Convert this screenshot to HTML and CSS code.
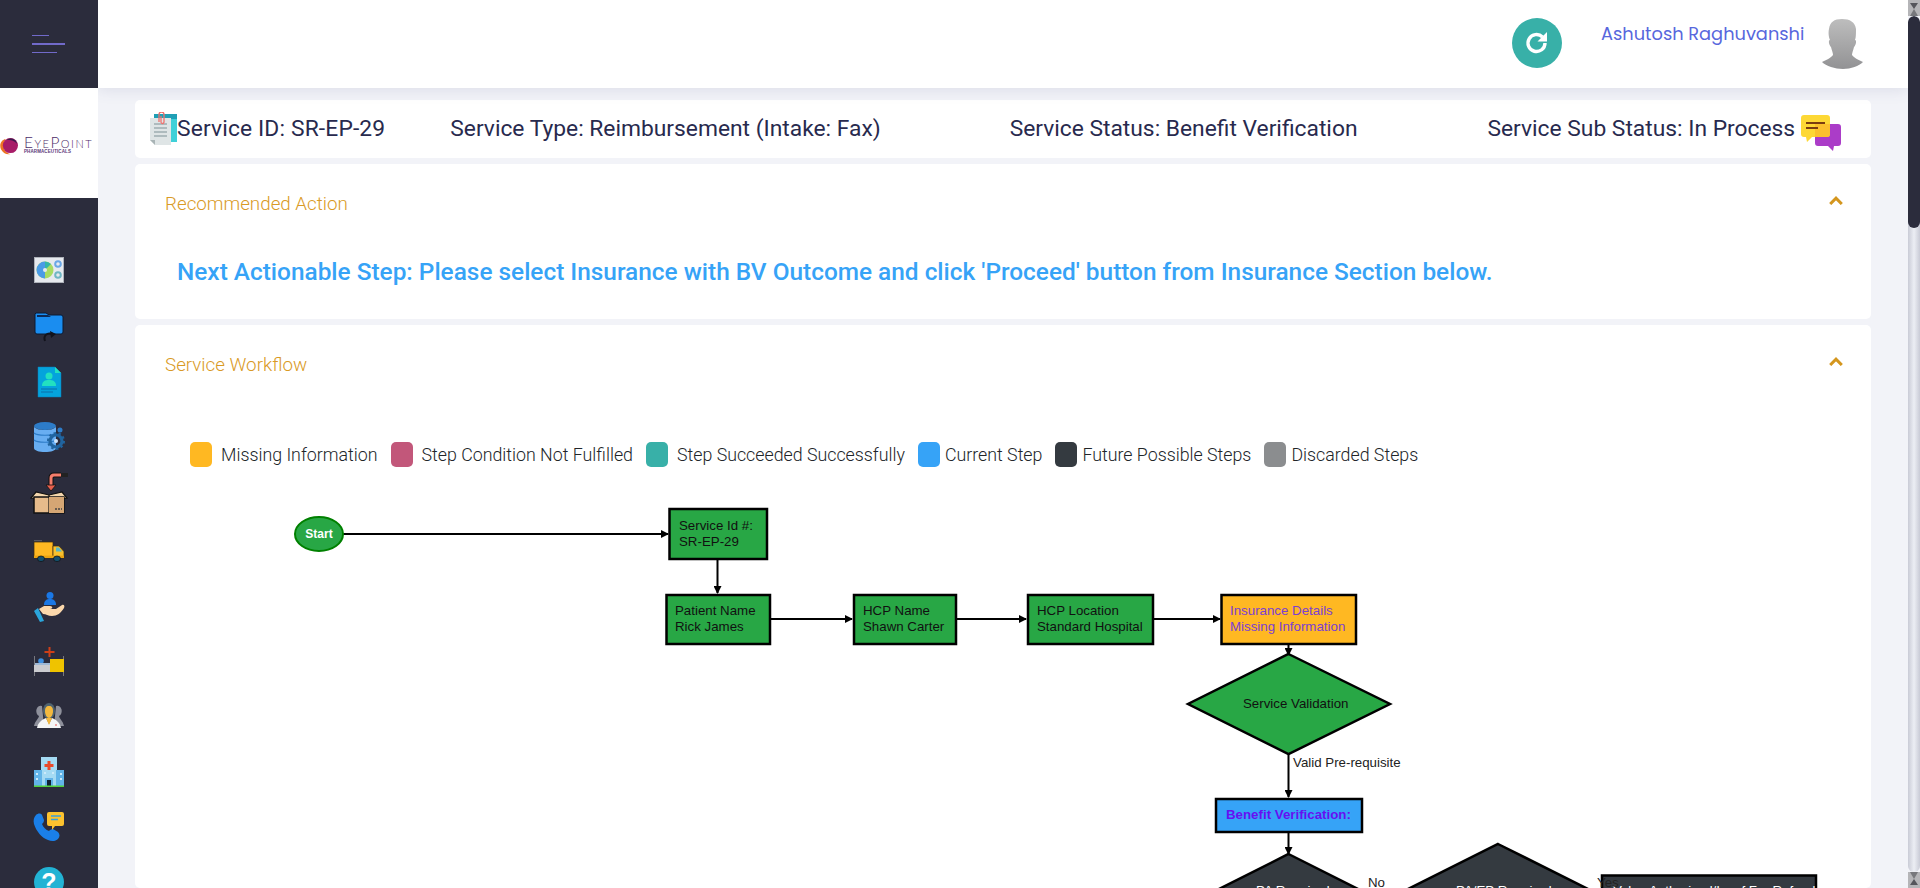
FILE: index.html
```html
<!DOCTYPE html>
<html lang="en">
<head>
<meta charset="utf-8">
<title>Service Workflow</title>
<link rel="stylesheet" href="styles.css">
</head>
<body>
<div class="app">
  <aside class="sidebar">
    <div class="burger-box">
      <span class="burger b1"></span><span class="burger b2"></span><span class="burger b3"></span>
    </div>
    <div class="logo">
      <svg class="logo-mark" viewBox="0 0 19 19"><path d="M6 2C1 3-1 8 1 13c2 4 6 6 10 5-4-1-7-4-7-8 0-3 1-6 2-8z" fill="#ee7423"/><circle cx="11" cy="9" r="8" fill="#a81c68"/><path d="M7 3c4-3 10-1 11 4-3-3-7-4-11-4z" fill="#3d1a4e"/></svg>
      <div class="logo-text">
        <div class="logo-name">EyePoint</div>
        <div class="logo-sub">PHARMACEUTICALS</div>
      </div>
    </div>
    <nav class="nav">
      <svg class="nav-icon" viewBox="0 0 30 30"><rect x="0.5" y="0.5" width="29" height="25" fill="#e6e9ee" stroke="#aeb2ba"/><circle cx="11" cy="13" r="8.5" fill="#a8dc62"/><path d="M11 13V4.500a8.500 8.500 0 0 0 0 17z" fill="#4a9be6"/><path d="M11 13V4.500a8.500 8.500 0 0 1 6 2.500z" fill="#35b6a6"/><circle cx="11" cy="13" r="2" fill="#e6e9ee"/><circle cx="24" cy="7" r="2.800" fill="none" stroke="#6aa7e6" stroke-width="2"/><circle cx="24" cy="18" r="2.800" fill="none" stroke="#6fb6c4" stroke-width="2"/></svg>
      <svg class="nav-icon" viewBox="0 0 30 30"><path d="M2 1h10l3 2h12a2 2 0 0 1 2 2v15a2 2 0 0 1-2 2H3a2 2 0 0 1-2-2V2z" fill="#1a8df0" stroke="#0d1a33" stroke-width="1"/><path d="M3 3h11l3 2H3z" fill="#0d2a55"/><path d="M11 29c-2-5 2-9 7-7" fill="none" stroke="#12131c" stroke-width="2"/><path d="M16 19l6 3-5 4z" fill="#12131c"/></svg>
      <svg class="nav-icon" viewBox="0 0 30 30"><path d="M4 0h17l6 6v24H4z" fill="#04a3dc" stroke="#0a7fb8" stroke-width=".5"/><path d="M21 0l6 6h-6z" fill="#22e0c0"/><circle cx="15" cy="9" r="3.500" fill="#22e0c0"/><path d="M8 19c0-5 3-6 7-6s7 1 7 6z" fill="#22e0c0"/><path d="M7 22h16M7 25h12" stroke="#0a6fa8" stroke-width="1"/></svg>
      <svg class="nav-icon" viewBox="0 0 30 30"><ellipse cx="11" cy="4" rx="11" ry="4" fill="#2d7cc8"/><path d="M0 4v22c0 2.500 5 4 11 4s11-1.500 11-4V4c0 2.500-5 4-11 4S0 6.500 0 4z" fill="#68aef2"/><path d="M0 11c3 3 19 3 22 0M0 18c3 3 19 3 22 0" fill="none" stroke="#2d7cc8" stroke-width="1.200"/><circle cx="26" cy="8" r="2.500" fill="#2d7cc8"/><circle cx="22" cy="19" r="6" fill="none" stroke="#20649f" stroke-width="3.200"/><circle cx="22" cy="19" r="8" fill="none" stroke="#20649f" stroke-width="2" stroke-dasharray="2.500 2.500"/><circle cx="22" cy="19" r="2" fill="#cfe6fb"/></svg>
      <svg class="nav-icon tall" viewBox="0 0 38 41"><path d="M21 13V5q0-3 3-3h7" fill="none" stroke="#111" stroke-width="5"/><path d="M21 13V5q0-3 3-3h7" fill="none" stroke="#f57d6c" stroke-width="3"/><path d="M31 0h7v4h-7z" fill="#222"/><path d="M16 12h10l-5 6z" fill="#e8604c" stroke="#111" stroke-width=".8"/><path d="M1 25l5-6 13 3 13-3 5 6-14 2z" fill="#f3d6ac" stroke="#111" stroke-width="1.200"/><path d="M4 24h30v16H4z" fill="#e6bb8b" stroke="#111" stroke-width="1.500"/><path d="M19 22v18" stroke="#111" stroke-width="1.200"/><path d="M19 24h15v16H19z" fill="#d5a674"/><path d="M25 36h7" stroke="#444" stroke-width="1.500" stroke-dasharray="2 1"/></svg>
      <svg class="nav-icon" viewBox="0 0 30 30"><g transform="translate(0 1) scale(1 .8)"><path d="M0 3h8v1H0z" fill="#77787f"/><path d="M0 5h19v20H0z" fill="#ffb822" stroke="#3a2c12" stroke-width=".8"/><path d="M19 10h6l5 7v8H19z" fill="#f9c12e" stroke="#3a2c12" stroke-width=".8"/><path d="M22 12h3l3 5h-6z" fill="#58b8c6"/><path d="M0 22h30v3H0z" fill="#e9a211"/><circle cx="7" cy="26" r="3.500" fill="#14506e" stroke="#111" stroke-width=".8"/><circle cx="23" cy="26" r="3.500" fill="#14506e" stroke="#111" stroke-width=".8"/></g></svg>
      <svg class="nav-icon" viewBox="0 0 30 30"><circle cx="16" cy="3.500" r="3.500" fill="#1a78e6"/><path d="M10 13c0-5 3-6 6-6s6 1 6 6z" fill="#1a78e6"/><path d="M5 17l5-3h6c3 0 3 3 0 3h6l6-4c2-1 3 1 2 3-3 5-7 8-12 8-4 0-6-2-9-2z" fill="#fbd8ac"/><path d="M0 19l4-3 6 13-4 1z" fill="#2ba6dc"/></svg>
      <svg class="nav-icon" viewBox="0 0 30 30"><path d="M14.500 0h2v4h4v2h-4v4h-2V6h-4V4h4z" fill="#cf3f17"/><path d="M0 9h1v20H0zM29 9h1v20h-1z" fill="#77787f"/><circle cx="7" cy="14" r="2.800" fill="#3d8fe0"/><path d="M1 16h15v4H1z" fill="#9fb9d6"/><path d="M0 18h16v7H0z" fill="#cbccd0"/><path d="M16 12h14v13H16z" fill="#efc300"/></svg>
      <svg class="nav-icon" viewBox="0 0 30 30"><path d="M8 4a4 5 0 0 0-3 10c0 2-4 5-5 10h10z" fill="#8e909b"/><path d="M22 4a4 5 0 0 1 3 10c0 2 4 5 5 10H20z" fill="#8e909b"/><ellipse cx="15" cy="9" rx="6" ry="8" fill="#4f6370"/><path d="M15 4c3 0 4 2 4 5 0 4-2 7-4 7s-4-3-4-7c0-3 1-5 4-5z" fill="#f4b93e"/><path d="M3 26c1-6 6-9 9-10l3 6 3-6c3 1 8 4 9 10z" fill="#f4f5f6"/><path d="M12 16h6l-3 7z" fill="#f4b93e"/><circle cx="22" cy="23" r="1" fill="#e88"/></svg>
      <svg class="nav-icon" viewBox="0 0 30 30"><path d="M7 0h16v29H7z" fill="#a4daf3"/><path d="M0 13h8v16H0zM22 13h8v16h-8z" fill="#62b4e8"/><path d="M13.500 4h3v3h3v3h-3v3h-3v-3h-3V7h3z" fill="#e9492a"/><path d="M11 21h8v8h-8z" fill="#62b4e8"/><path d="M13 23h4v6h-4z" fill="#123"/><path d="M2 16h2v2H2zM2 21h2v2H2zM26 16h2v2h-2zM26 21h2v2h-2zM10 15h2v2h-2zM18 15h2v2h-2z" fill="#cbeafa"/><path d="M0 28.500h30V30H0z" fill="#52d13c"/></svg>
      <svg class="nav-icon" viewBox="0 0 30 30"><path d="M2 3c2-2 5-2 6 0l2 5c0 2-1 3-2 4 1 3 4 6 7 7 1-1 2-2 4-2l5 3c2 2 2 5 0 7-2 2-6 3-10 1C8 26 2 19 0 12-1 8 0 5 2 3z" fill="#1a7fe8"/><path d="M15 0h13a2 2 0 0 1 2 2v10a2 2 0 0 1-2 2h-7l-3 4v-4h-3a2 2 0 0 1-2-2V2a2 2 0 0 1 2-2z" fill="#fcc22e"/><path d="M17 4h10M17 7.500h7" stroke="#3a9fd8" stroke-width="1.500"/></svg>
      <div class="help">?</div>
    </nav>
  </aside>

  <div class="main">
    <header class="topbar">
      <button class="refresh" type="button" aria-label="Refresh">
        <svg viewBox="0 0 24 24"><path d="M20 12a8.500 8.500 0 1 1-2.500-6" fill="none" stroke="#fff" stroke-width="3.400"/><path d="M22 1v9.500h-9.500z" fill="#fff"/></svg>
      </button>
      <div class="user-name">Ashutosh Raghuvanshi</div>
      <svg class="avatar" viewBox="0 0 41 50"><defs><linearGradient id="ag" x1="0" y1="0" x2="0" y2="1"><stop offset="0" stop-color="#bdbdbd"/><stop offset="1" stop-color="#929294"/></linearGradient></defs><path d="M20 0c8 0 13 3 14 10 0 4 0 9-1 11 2 0 1 5-1 7-1 4-2 6-2 8 2 3 7 5 11 7-4 4-12 7-20 7S4 47 0 43c4-2 9-4 11-7 0-2-1-4-2-8-2-2-3-7-1-7-1-2-2-7-1-11C8 3 12 0 20 0z" fill="url(#ag)"/></svg>
    </header>

    <div class="content">
      <section class="card info">
        <svg class="info-icon" viewBox="0 0 27 33"><path d="M4 2h23v28H4z" fill="#3fd0d8"/><path d="M4 2h23v5H4z" fill="#1f9fb5"/><path d="M0 6h21v27H5l-5-5z" fill="#dfe5e6"/><path d="M0 28h5v5z" fill="#a9b4b6"/><path d="M4 12h13M4 16h13M4 20h13M4 24h13" stroke="#7f9296" stroke-width="1.200"/><path d="M9 10V2.500a2.500 2.500 0 0 1 5 0V10a1.500 1.500 0 0 1-3 0V4" fill="none" stroke="#f0716e" stroke-width="1.300"/></svg>
        <span class="info-text id">Service ID: SR-EP-29</span>
        <span class="info-text type">Service Type: Reimbursement (Intake: Fax)</span>
        <span class="info-text status">Service Status: Benefit Verification</span>
        <span class="info-text sub">Service Sub Status: In Process</span>
        <svg class="chat-icon" viewBox="0 0 40 36"><path d="M14 9h23a3 3 0 0 1 3 3v16a3 3 0 0 1-3 3h-4l-1 5-5-5H17a3 3 0 0 1-3-3z" fill="#ab3cc8"/><path d="M3 0h23a3 3 0 0 1 3 3v16a3 3 0 0 1-3 3H11l-5 5-1-5H3a3 3 0 0 1-3-3V3a3 3 0 0 1 3-3z" fill="#fdd835"/><path d="M14 9h15v10a3 3 0 0 1-3 3H14z" fill="#fbc02d"/><path d="M5 8h19" stroke="#7a3d10" stroke-width="2"/><path d="M5 13h12" stroke="#7a3d10" stroke-width="2"/></svg>
      </section>

      <section class="card action">
        <div class="card-head">
          <span class="card-title">Recommended Action</span>
          <svg class="chevron" viewBox="0 0 14 9"><path d="M1.200 8L7 2.200 12.800 8" fill="none" stroke="#d4961e" stroke-width="3"/></svg>
        </div>
        <p class="next-step">Next Actionable Step: Please select Insurance with BV Outcome and click 'Proceed' button from Insurance Section below.</p>
      </section>

      <section class="card workflow">
        <div class="card-head">
          <span class="card-title">Service Workflow</span>
          <svg class="chevron" viewBox="0 0 14 9"><path d="M1.200 8L7 2.200 12.800 8" fill="none" stroke="#d4961e" stroke-width="3"/></svg>
        </div>
        <ul class="legend">
          <li class="legend-item"><span class="swatch missing"></span>Missing Information</li>
          <li class="legend-item"><span class="swatch failed"></span>Step Condition Not Fulfilled</li>
          <li class="legend-item"><span class="swatch done"></span>Step Succeeded Successfully</li>
          <li class="legend-item tight"><span class="swatch current"></span>Current Step</li>
          <li class="legend-item tight"><span class="swatch future"></span>Future Possible Steps</li>
          <li class="legend-item tight"><span class="swatch discarded"></span>Discarded Steps</li>
        </ul>
        <svg class="chart" viewBox="135 500 1736 388">
          <defs>
            <marker id="arrow" markerWidth="8" markerHeight="8" refX="7" refY="4" orient="auto" markerUnits="userSpaceOnUse"><path d="M0 0L8 4L0 8z" fill="#000"/></marker>
          </defs>
          <g class="edges">
            <path marker-end="url(#arrow)" d="M343 534H668"/>
            <path marker-end="url(#arrow)" d="M717.500 560V593"/>
            <path marker-end="url(#arrow)" d="M771 619H852"/>
            <path marker-end="url(#arrow)" d="M957 619H1026"/>
            <path marker-end="url(#arrow)" d="M1154 619H1220"/>
            <path marker-end="url(#arrow)" d="M1288.500 645V655"/>
            <path marker-end="url(#arrow)" d="M1288.500 754V797"/>
            <path marker-end="url(#arrow)" d="M1288.500 833V854"/>
          </g>
          <ellipse class="start" cx="319" cy="534" rx="24" ry="17"/>
          <text class="t t-white" x="319" y="538" text-anchor="middle">Start</text>

          <rect class="node green" x="669.500" y="509" width="97.500" height="50"/>
          <text class="t" x="679" y="530">Service Id #:</text>
          <text class="t" x="679" y="546">SR-EP-29</text>

          <rect class="node green" x="666.500" y="595" width="103.500" height="49"/>
          <text class="t" x="675" y="615">Patient Name</text>
          <text class="t" x="675" y="631">Rick James</text>

          <rect class="node green" x="854" y="595" width="102" height="49"/>
          <text class="t" x="863" y="615">HCP Name</text>
          <text class="t" x="863" y="631">Shawn Carter</text>

          <rect class="node green" x="1028" y="595" width="125" height="49"/>
          <text class="t" x="1037" y="615">HCP Location</text>
          <text class="t" x="1037" y="631">Standard Hospital</text>

          <rect class="node amber" x="1221.500" y="595" width="134.500" height="49"/>
          <text class="t t-purple" x="1230" y="615">Insurance Details</text>
          <text class="t t-purple" x="1230" y="631">Missing Information</text>

          <polygon class="node green" points="1288.500,654 1390,704 1288.500,754 1188,704"/>
          <text class="t" x="1243" y="708">Service Validation</text>
          <text class="t t-label" x="1293" y="767">Valid Pre-requisite</text>

          <rect class="node blue" x="1216" y="799" width="146" height="33"/>
          <text class="t t-bold" x="1226" y="819">Benefit Verification:</text>

          <polygon class="node dark" points="1288.500,854 1360,890 1288.500,926 1217,890"/>
          <text class="t t-white-plain" x="1256" y="895">PA Required</text>
          <polygon class="node dark" points="1498,844 1590,890 1498,936 1406,890"/>
          <text class="t t-white-plain" x="1456" y="895">PA/EP Required</text>
          <text class="t t-label" x="1368" y="887">No</text>

          <path class="clipbox" d="M1602 890V875.500H1816V890z"/>
          <text class="t t-white-plain" x="1613" y="895">Value Authorized/Insuf For Refund</text>
          <text class="t t-label" x="1597" y="887">Yes</text>
        </svg>
      </section>
    </div>
  </div>

  <div class="scrollbar">
    <svg class="scroll-btn" viewBox="0 0 12 16"><path d="M0 0h12v16H0z" fill="#b5b5b8"/><path d="M2 3h8L6 9z" fill="#55565c"/><path d="M2 16l4-7 4 7z" fill="#77787c"/></svg>
    <div class="scroll-track"><div class="scroll-thumb"></div></div>
    <svg class="scroll-btn" viewBox="0 0 12 16"><path d="M0 0h12v16H0z" fill="#b5b5b8"/><path d="M2 0h8L6 7z" fill="#77787c"/><path d="M2 13l4-6 4 6z" fill="#55565c"/></svg>
  </div>
</div>
</body>
</html>
```
FILE: styles.css
```css
* { box-sizing: border-box; }
html, body { margin: 0; height: 100%; overflow: hidden; }
body { font-family: Roboto, "Liberation Sans", sans-serif; background: #f2f3f8; color: #333; }

.app { display: flex; height: 888px; overflow: hidden; }

/* Sidebar */
.sidebar { width: 98px; flex: none; background: #2b2c3c; display: flex; flex-direction: column; overflow: hidden; }
.burger-box { height: 88px; flex: none; padding: 35px 0 0 32px; display: flex; flex-direction: column; }
.burger { display: block; background: #716aca; height: 1px; margin-bottom: 7px; }
.b1 { width: 17px; }
.b2 { width: 33px; height: 2px; }
.b3 { width: 25px; }
.logo { height: 110px; flex: none; background: #fff; display: flex; align-items: flex-start; gap: 6px; padding-top: 49px; }
.logo-mark { width: 18px; height: 18px; flex: none; }
.logo-text { margin-top: -1px; }
.logo-name { font-family: Lato, sans-serif; font-weight: 300; font-variant: small-caps; font-size: 15.500px; line-height: 13px; color: #4d2c68; letter-spacing: 1.500px; white-space: nowrap; }
.logo-sub { font-family: "Liberation Sans", sans-serif; font-size: 4.500px; line-height: 6px; font-weight: 700; color: #5b3a78; letter-spacing: .1px; white-space: nowrap; }
.nav { display: flex; flex-direction: column; align-items: center; gap: 25px; padding-top: 59px; flex: none; }
.nav-icon { width: 30px; height: 30px; flex: none; overflow: visible; }
.nav-icon.tall { width: 38px; height: 41px; margin: -4px 0 -2px; }
.help { width: 30px; height: 30px; flex: none; border-radius: 50%; background: #22b3d4; color: #fff; font: 700 25px/30px "Liberation Sans", sans-serif; text-align: center; }

/* Main */
.main { flex: 1; min-width: 0; display: flex; flex-direction: column; overflow: hidden; }
.topbar { height: 88px; flex: none; background: #fff; display: flex; align-items: flex-start; box-shadow: 0 2px 14px rgba(80, 85, 130, .13); position: relative; margin-left: -1px; }
.refresh { width: 50px; height: 50px; margin: 18px 0 0 1415px; padding: 13px; border: 0; border-radius: 50%; background: #38b0a8; flex: none; }
.refresh svg { display: block; width: 24px; height: 24px; }
.user-name { margin: 22px 0 0 39px; width: 221px; font: 400 17.800px/24px Poppins, Inter, sans-serif; color: #5867dd; white-space: nowrap; }
.avatar { width: 41px; height: 50px; flex: none; margin: 19px 0 0 0; }

.content { flex: 1; padding: 12px 37px 0; display: flex; flex-direction: column; gap: 6px; }
.card { background: #fff; border-radius: 5px; flex: none; }

.info { height: 58px; display: flex; align-items: center; padding-left: 15px; }
.info-icon { width: 27px; height: 33px; flex: none; margin-top: -1px; }
.info-text { font-size: 22.800px; line-height: 30px; color: #282a4e; white-space: nowrap; }
.id { margin-left: 0; letter-spacing: .15px; }
.type { margin-left: 65px; }
.status { margin-left: 129px; }
.sub { margin-left: 130px; }
.chat-icon { width: 40px; height: 36px; flex: none; margin: 8px 0 0 6px; }

.card-head { display: flex; justify-content: space-between; align-items: flex-start; padding: 27px 28px 0 30px; height: 53px; }
.card-title { font-size: 18.800px; line-height: 26px; font-weight: 300; color: #d99a25; }
.chevron { width: 14px; height: 9px; margin-top: 5px; display: block; }

.action { height: 155px; }
.next-step { margin: 40px 0 0 42px; font-size: 24.400px; line-height: 30px; font-weight: 500; color: #36a3f7; white-space: nowrap; }

.workflow { height: 563px; overflow: hidden; }
.legend { list-style: none; margin: 64px 0 0; padding: 0 0 0 55px; display: flex; gap: 13px; }
.legend-item { display: flex; align-items: center; gap: 9px; font-size: 17.800px; font-weight: 300; line-height: 25px; color: #212529; white-space: nowrap; }
.legend-item.tight { gap: 5px; }
.swatch { width: 22px; height: 25px; border-radius: 5px; flex: none; }
.missing { background: #ffb822; }
.failed { background: #c2577a; }
.done { background: #38b0a8; }
.current { background: #36a3f7; }
.future { background: #343a40; }
.discarded { background: #8b8d8f; }

.chart { display: block; width: 1736px; height: 388px; margin-top: 33px; }
.edges path { fill: none; stroke: #000; stroke-width: 2; }
.start { fill: #28a745; stroke: #008000; stroke-width: 2; }
.node { stroke: #000; stroke-width: 2.500; }
.green { fill: #28a745; }
.amber { fill: #ffb822; }
.blue { fill: #36a3f7; }
.dark { fill: #343a40; }
.clipbox { fill: #343a40; stroke: #000; stroke-width: 2.500; }
.t { font: 13.300px "Liberation Sans", Arial, sans-serif; fill: #111; }
.t-white { fill: #fff; font-weight: 700; font-size: 12px; }
.t-white-plain { fill: #fff; }
.t-purple { fill: #7b3fd3; }
.t-bold { fill: #6610f2; font-weight: 700; }
.t-label { fill: #222; }

/* Scrollbar */
.scrollbar { width: 12px; flex: none; display: flex; flex-direction: column; background: #f2f3f8; }
.scroll-btn { width: 12px; height: 16px; flex: none; display: block; }
.scroll-track { flex: 1; background: linear-gradient(to right, #c9cbd6, #eceef4 50%, #c9cbd6); border-radius: 6px; overflow: hidden; }
.scroll-thumb { height: 212px; background: #2b2c3c; border-radius: 6px; }
```
